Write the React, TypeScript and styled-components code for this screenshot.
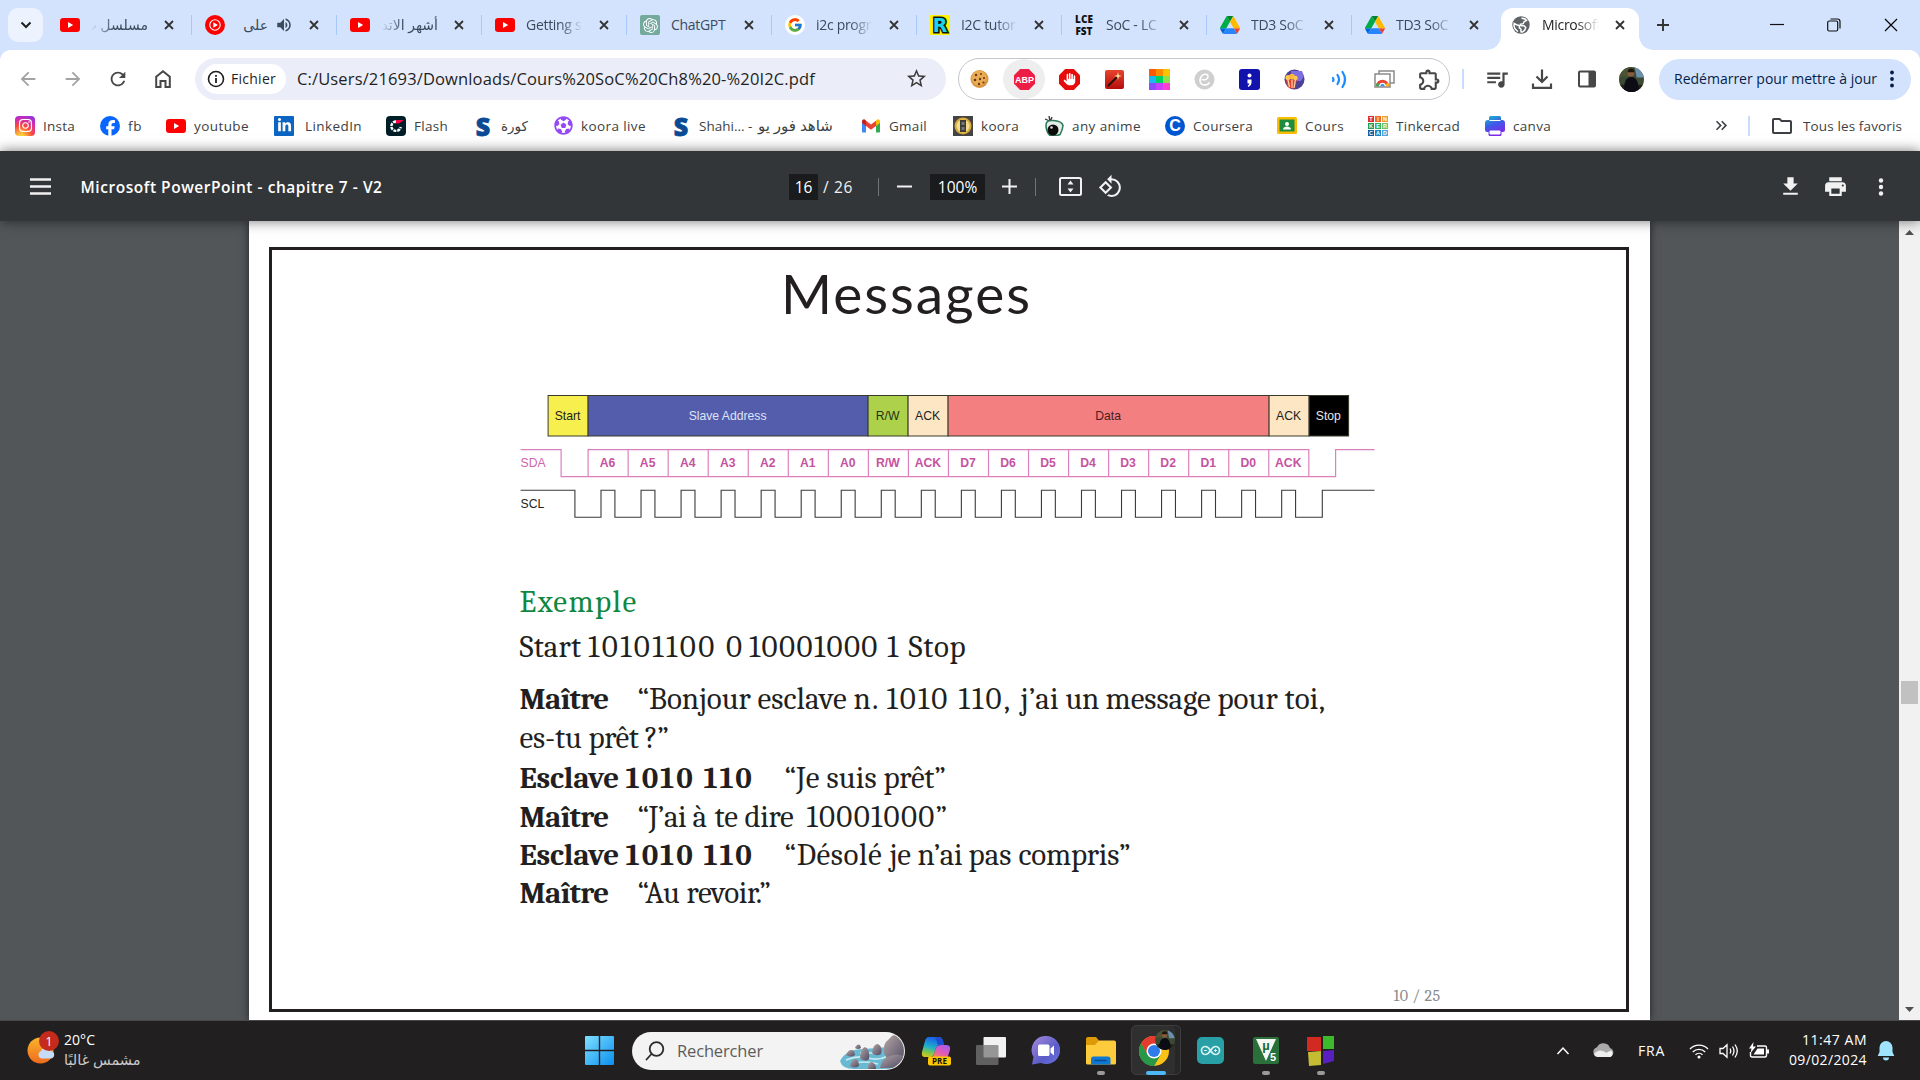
import React, { useLayoutEffect, useRef, useState } from "react";
import styled, { createGlobalStyle, css } from "styled-components";
import { FcGoogle } from "react-icons/fc";
import { SiOpenai } from "react-icons/si";
import { FaInstagram, FaLinkedinIn, FaFutbol } from "react-icons/fa";
import { FaHand } from "react-icons/fa6";
import {
  MdVolumeUp,
  MdQueueMusic,
  MdPrint,
  MdFileDownload,
  MdRotate90DegreesCcw,
  MdStarBorder,
  MdOutlineExtension,
  MdOutlineFolder,
  MdKeyboardDoubleArrowRight,
  MdRefresh,
  MdArrowBack,
  MdArrowForward,
} from "react-icons/md";

const ui = `"Segoe UI", "Open Sans", "Noto Sans", "DejaVu Sans", sans-serif`;
const serif = `Cambria, Caladea, "Liberation Serif", serif`;

const Global = createGlobalStyle`
  * { box-sizing: border-box; }
  body { margin: 0; background: #202020; font-family: ${ui}; overflow: hidden; }
  svg { display: block; flex: none; }
`;

const FitSpan = styled.span`
  display: inline-block;
  width: max-content;
  white-space: pre;
  flex: none;
`;

/* Tracks text so that it fills the given width. */
function Fit({ width, children }: { width: number; children: string }) {
  const ref = useRef<HTMLSpanElement>(null);
  const [spacing, setSpacing] = useState(0);
  useLayoutEffect(() => {
    if (!ref.current) return;
    ref.current.style.letterSpacing = "0px";
    const natural = ref.current.getBoundingClientRect().width;
    const next = (width - natural) / children.length;
    ref.current.style.letterSpacing = `${next}px`;
    setSpacing(next);
  }, [width, children]);
  return (
    <FitSpan ref={ref} style={{ letterSpacing: spacing }}>
      {children}
    </FitSpan>
  );
}

type Word = [string, number];
const WordRow = styled.span`
  display: inline-flex;
`;
/* A line of words, each tracked to its own advance width. */
const Words = ({ list }: { list: Word[] }) => (
  <WordRow>
    {list.map(([t, w], i) => (
      <Fit key={i} width={w}>{i < list.length - 1 ? `${t} ` : t}</Fit>
    ))}
  </WordRow>
);

const Screen = styled.div`
  width: 1920px;
  height: 1080px;
  display: flex;
  flex-direction: column;
  overflow: hidden;
`;

/* ---------- tab strip ---------- */

const TabStrip = styled.div`
  height: 50px;
  background: #d3e3fd;
  display: flex;
  align-items: flex-start;
  padding-left: 8px;
`;
const TabSearch = styled.div`
  width: 35px;
  height: 34px;
  margin: 8px 4px 0 0;
  border-radius: 10px;
  background: #ecf3fe;
  display: grid;
  place-items: center;
`;
const TabBox = styled.div<{ $active?: boolean; $line?: boolean }>`
  position: relative;
  width: 145px;
  height: 50px;
  padding: 0 0 0 13px;
  display: flex;
  align-items: center;
  flex: none;
  color: #3c4a5c;
  ${(p) =>
    p.$line &&
    css`
      background: linear-gradient(#a8c7fa, #a8c7fa) 144px 15px / 2px 20px no-repeat;
    `}
  ${(p) =>
    p.$active &&
    css`
      width: 138px;
      height: 42px;
      margin: 8px 0 0 4px;
      padding: 0 0 8px 10px;
      background: #fff;
      border-radius: 12px 12px 0 0;
      color: #1f1f1f;
      &::before,
      &::after {
        content: "";
        position: absolute;
        bottom: 0;
        width: 14px;
        height: 14px;
      }
      &::before {
        left: -14px;
        background: radial-gradient(circle at 0 0, transparent 13.5px, #fff 14px);
      }
      &::after {
        right: -14px;
        background: radial-gradient(circle at 100% 0, transparent 13.5px, #fff 14px);
      }
    `}
`;
const TabText = styled.div<{ $rtl?: boolean; $w?: number; $full?: boolean }>`
  width: ${(p) => p.$w ?? 57}px;
  margin-left: 11px;
  font-size: 14px;
  line-height: 24px;
  letter-spacing: ${(p) => (p.$rtl ? 0 : -0.3)}px;
  white-space: nowrap;
  overflow: hidden;
  direction: ${(p) => (p.$rtl ? "rtl" : "ltr")};
  ${(p) =>
    !p.$full &&
    css`
      mask-image: linear-gradient(to ${p.$rtl ? "left" : "right"}, #000 60%, transparent 100%);
    `}
`;
const TabClose = styled.div`
  margin-left: 15.5px;
  color: #333;
`;
const NewTab = styled.div`
  margin: 17px 0 0 16px;
`;
const WindowButtons = styled.div`
  margin-left: auto;
  height: 49px;
  display: grid;
  grid-template-columns: 57px 57px 58px;
  place-items: center;
`;

/* ---------- toolbar ---------- */

const Toolbar = styled.div`
  position: relative;
  height: 58px;
  background: #fff;
  padding: 8px 8px 8px 17px;
  display: flex;
  align-items: center;
`;
const Corners = styled.div`
  position: absolute;
  inset: 0 0 auto 0;
  height: 10px;
  background: radial-gradient(circle at 10px 10px, transparent 9.5px, #d3e3fd 10px) 0 0 / 10px 10px no-repeat,
    radial-gradient(circle at 0 10px, transparent 9.5px, #d3e3fd 10px) 100% 0 / 10px 10px no-repeat;
`;
const NavIcons = styled.div`
  display: flex;
  gap: 23px;
  width: 178px;
  color: #474747;
`;
const Omnibox = styled.div`
  width: 751px;
  height: 42px;
  border-radius: 21px;
  background: #ebeef8;
  display: flex;
  align-items: center;
  padding: 0 18px 1px 7px;
  font-size: 16.5px;
  color: #1f1f1f;
`;
const Chip = styled.div`
  width: 84px;
  height: 30px;
  border-radius: 15px;
  background: #fff;
  display: flex;
  align-items: center;
  gap: 6px;
  padding-left: 5px;
  margin-right: 11px;
  font-size: 14px;
`;
const OmniEnd = styled.div`
  margin-left: auto;
  color: #3c3c3c;
`;
const Extensions = styled.div`
  width: 492px;
  height: 42px;
  margin-left: 12px;
  border: 1px solid #c3c6cc;
  border-radius: 21px;
  display: flex;
  align-items: center;
  justify-content: space-between;
  padding: 0 9px 0 10px;
`;
const ExtSlot = styled.div<{ $hover?: boolean }>`
  width: 20px;
  height: 20px;
  display: flex;
  align-items: center;
  justify-content: center;
  ${(p) =>
    p.$hover &&
    css`
      width: 42px;
      height: 40px;
      margin: 0 -11px;
      border-radius: 50%;
      background: #eee;
    `}
`;
const Divider = styled.div<{ $m: string }>`
  width: 2px;
  height: 20px;
  background: #c9dcfb;
  margin: ${(p) => p.$m};
  flex: none;
`;
const ToolIcons = styled.div`
  display: grid;
  grid-template-columns: repeat(4, 45px);
  place-items: center;
  color: #474747;
  margin-left: 10px;
`;
const Update = styled.div`
  width: 252px;
  height: 41px;
  margin-left: 5px;
  border-radius: 21px;
  background: #d3e3fd;
  color: #041e49;
  display: flex;
  align-items: center;
  padding: 0 0 1px 15px;
  font-size: 14px;
`;

/* ---------- bookmarks ---------- */

const Bookmarks = styled.div`
  height: 43px;
  background: #fff;
  padding: 0 18px 8px 15px;
  display: flex;
  align-items: center;
  font-size: 13.5px;
  color: #3c3f43;
`;
const Bookmark = styled.div<{ $w: number; $gap?: number }>`
  width: ${(p) => p.$w}px;
  display: flex;
  align-items: center;
  gap: ${(p) => p.$gap ?? 8}px;
  white-space: nowrap;
  flex: none;
`;
const ArabicPart = styled.span`
  font-size: 15px;
  line-height: 18px;
  margin-left: 2px;
`;
const AllBookmarks = styled.div`
  margin-left: auto;
  display: flex;
  align-items: center;
`;

/* ---------- PDF viewer ---------- */

const PdfBar = styled.div`
  position: relative;
  z-index: 2;
  height: 70px;
  background: #323639;
  box-shadow: 0 0 12px rgba(0, 0, 0, 0.55);
  color: #f1f1f1;
  display: grid;
  grid-template-columns: 789px 1fr 142px;
  align-items: center;
  font-size: 15.5px;
`;
const PdfTitle = styled.div`
  display: flex;
  align-items: center;
  gap: 29.5px;
  padding: 1px 0 0 30px;
  font-weight: 600;
  color: #fff;
`;
const PdfControls = styled.div`
  display: flex;
  align-items: center;
  padding-top: 1px;
`;
const Field = styled.div<{ $w: number }>`
  width: ${(p) => p.$w}px;
  height: 26px;
  line-height: 26px;
  background: #191b1c;
  text-align: center;
  color: #fff;
`;
const PageTotal = styled.div`
  margin-left: 5px;
  width: 55px;
`;
const BarLine = styled.div`
  width: 1px;
  height: 18px;
  background: #70757a;
`;
const Space = styled.div<{ $w: number }>`
  width: ${(p) => p.$w}px;
  flex: none;
`;
const PdfActions = styled.div`
  display: flex;
  align-items: center;
  padding-top: 1px;
`;
const Viewer = styled.div`
  height: 799px;
  background: #525659;
  display: flex;
`;
const Page = styled.div`
  width: 1401px;
  height: 799px;
  margin-left: 249px;
  background: #fff;
  box-shadow: 0 0 8px rgba(0, 0, 0, 0.6);
  padding: 26px 21px 7px 20px;
`;
const Frame = styled.div`
  height: 765px;
  border: 3px solid #231f20;
  padding-top: 10px;
  color: #231f20;
  overflow: hidden;
`;
const Title = styled.h1`
  margin: 0 0 64px 509px;
  font: 400 55px/66px Lato, sans-serif;
`;
const DiagramBox = styled.div`
  margin: 0 0 58px 243px;
`;
const Script = styled.div`
  margin-left: 247.5px;
  display: grid;
  grid-template-rows: 45px 52px 39px 40px 39px 38px 38px 39px;
  font: 400 31px/39px ${serif};
`;
const Line = styled.div<{ $green?: boolean }>`
  display: flex;
  align-items: flex-start;
  height: 39px;
  color: ${(p) => (p.$green ? "#11873f" : "#231f20")};
`;
const Speaker = styled.b<{ $w: number }>`
  width: ${(p) => p.$w}px;
  flex: none;
`;
const PageNumber = styled.div`
  margin: 73px 0 0 1121.5px;
  font: 400 16px/20px ${serif};
  color: #8a8a8a;
`;
const Scrollbar = styled.div`
  margin-left: auto;
  width: 21px;
  background: #f1f1f1;
  display: flex;
  flex-direction: column;
  align-items: center;
  padding: 9px 0 8px;
`;
const Thumb = styled.div`
  width: 17px;
  height: 23px;
  margin: 446px 0 auto;
  background: #c1c1c1;
`;

/* ---------- taskbar ---------- */

const Taskbar = styled.div`
  height: 60px;
  background: #211f1f;
  border-top: 1px solid #484848;
  display: grid;
  grid-template-columns: 585px 970px 365px;
  align-items: center;
  color: #fff;
  font-size: 14px;
`;
const Weather = styled.div`
  display: flex;
  align-items: center;
  padding-left: 26px;
  gap: 4px;
  height: 59px;
`;
const WeatherText = styled.div`
  display: flex;
  flex-direction: column;
  font-size: 14px;
  line-height: 20px;
  padding-bottom: 2px;
`;
const Muted = styled.span`
  color: #c9c9c9;
  font-size: 14.500px;
`;
const Apps = styled.div`
  display: flex;
  align-items: center;
  height: 59px;
`;
const SearchPill = styled.div`
  width: 273px;
  height: 38px;
  margin: 0 3px 0 18px;
  border-radius: 19px;
  background: #f3f3f3;
  color: #5c5c5c;
  display: flex;
  align-items: center;
  padding: 0 2px 0 13px;
  gap: 12px;
  font-size: 16.5px;
`;
const AppSlot = styled.div`
  position: relative;
  width: 55px;
  height: 59px;
  display: grid;
  place-items: center;
`;
const ActiveBack = styled.div`
  width: 50px;
  height: 50px;
  margin-top: -1px;
  border-radius: 5px;
  border: 1px solid #3d3d3d;
  background: #2f2f2f;
  box-shadow: inset -5px 0 0 #272727;
  display: grid;
  place-items: center;
`;
const Running = styled.div<{ $on?: boolean }>`
  position: absolute;
  bottom: 5px;
  left: ${(p) => (p.$on ? 18 : 24)}px;
  width: ${(p) => (p.$on ? 20 : 8)}px;
  height: 4px;
  border-radius: 2px;
  background: ${(p) => (p.$on ? "#4cb8f8" : "#9a9a9a")};
`;
const Tray = styled.div`
  display: grid;
  grid-template-columns: 37px 45px 51px 30px 30px 40px 78px 10px 20px;
  align-items: center;
  padding-left: 1px;
`;
const Clock = styled.div`
  text-align: right;
  display: flex;
  flex-direction: column;
  align-items: flex-end;
  line-height: 20px;
  padding-bottom: 2px;
`;

/* ---------- icons ---------- */

const Yt = () => (
  <svg width="20" height="20" viewBox="0 0 20 20">
    <rect y="3" width="20" height="14" rx="3.2" fill="#f00" />
    <path d="M8 7l5.2 3L8 13z" fill="#fff" />
  </svg>
);
const YtMusic = () => (
  <svg width="20" height="20" viewBox="0 0 20 20">
    <circle cx="10" cy="10" r="10" fill="#f00" />
    <circle cx="10" cy="10" r="5.2" fill="none" stroke="#fff" strokeWidth="1.1" />
    <path d="M8.3 7.2l4.6 2.8-4.6 2.8z" fill="#fff" />
  </svg>
);
const Globe = () => (
  <svg width="20" height="20" viewBox="0 0 20 20">
    <circle cx="10" cy="10" r="8.700" fill="#5f6368" />
    <path d="M10.500 3.200c2.500 0 4 .9 5 2.300l-2.300 1-1 2.200-2.700.6.500 1.500h3l1.700 1.700-1 2.700-2.200 1.800-1.500-.1v-2.600l-1.700-1.700V10.500L5.500 9.700 3.200 8.500 3 11q.3 3 3.200 5l.8.400" fill="none" stroke="#fff" strokeWidth="1.500" />
  </svg>
);
const Drive = () => (
  <svg width="20" height="20" viewBox="0 0 87.3 78">
    <path d="m6.6 66.85 3.85 6.65c.8 1.4 1.95 2.5 3.3 3.3l13.75-23.8h-27.5c0 1.55.4 3.1 1.2 4.5z" fill="#0066da" />
    <path d="m43.65 25-13.75-23.8c-1.35.8-2.5 1.9-3.3 3.3l-25.4 44a9.06 9.06 0 0 0 -1.2 4.5h27.5z" fill="#00ac47" />
    <path d="m73.55 76.8c1.35-.8 2.5-1.9 3.3-3.3l1.6-2.75 7.65-13.25c.8-1.4 1.2-2.95 1.2-4.5h-27.5l5.85 11.5z" fill="#ea4335" />
    <path d="m43.65 25 13.75-23.8c-1.35-.8-2.9-1.2-4.5-1.2h-18.5c-1.6 0-3.15.45-4.5 1.2z" fill="#00832d" />
    <path d="m59.8 53h-32.3l-13.75 23.8c1.35.8 2.9 1.2 4.5 1.2h50.8c1.6 0 3.15-.45 4.5-1.2z" fill="#2684fc" />
    <path d="m73.4 26.5-12.7-22c-.8-1.4-1.95-2.5-3.3-3.3l-13.75 23.8 16.15 28h27.45c0-1.55-.4-3.1-1.2-4.5z" fill="#ffba00" />
  </svg>
);
const Tile = styled.div<{ $bg?: string; $fg?: string; $r?: number; $fs?: number }>`
  width: 20px;
  height: 20px;
  border-radius: ${(p) => p.$r ?? 3}px;
  background: ${(p) => p.$bg ?? "transparent"};
  color: ${(p) => p.$fg ?? "#fff"};
  display: grid;
  place-items: center;
  flex: none;
  font: 700 ${(p) => p.$fs ?? 12}px/1 "Liberation Sans", sans-serif;
`;
const LceTile = styled.div`
  width: 20px;
  font: 800 10px/12px "Open Sans", sans-serif;
  color: #111;
  text-align: center;
  margin-left: -1px;
  margin-right: 1px;
`;
const Comic = styled(Tile)`
  font: 900 19px/1 "DejaVu Sans", sans-serif;
  background: #fff200;
  color: #19d4ee;
  border-radius: 0;
  -webkit-text-stroke: 3px #111;
  paint-order: stroke fill;
`;
const Cross = ({ s = 10, w = 1.8 }: { s?: number; w?: number }) => (
  <svg width={s} height={s} viewBox={`0 0 ${s} ${s}`}>
    <path d={`M1 1L${s - 1} ${s - 1}M${s - 1} 1L1 ${s - 1}`} stroke="currentColor" strokeWidth={w} />
  </svg>
);
const SLetter = styled(Tile)`
  font: 800 25px/20px "Open Sans", sans-serif;
  color: #0b4a94;
  -webkit-text-stroke: 0.8px #0b4a94;
`;
const SBrand = () => <SLetter>S</SLetter>;
const Gmail = () => (
  <svg width="20" height="20" viewBox="0 0 20 20">
    <path d="M1 4.5v11c0 .8.5 1 1.2 1H5V8z" fill="#4285f4" />
    <path d="M15 8v8.500h2.800c.7 0 1.200-.3 1.200-1v-11z" fill="#34a853" />
    <path d="M5 4.800V10l5 3.800 5-3.800V4.800L10 8.600z" fill="#ea4335" />
    <path d="M1 5.500C1 3.400 3.200 2.800 4.400 3.900L5 4.600V10L1 7z" fill="#c5221f" />
    <path d="M19 5.500c0-2.100-2.200-2.700-3.400-1.600l-.6.700V10l4-3z" fill="#fbbc04" />
  </svg>
);
const Facebook = () => (
  <svg width="20" height="20" viewBox="0 0 20 20">
    <circle cx="10" cy="10" r="10" fill="#0866ff" />
    <path d="M8.300 20v-6.800H6.200v-3h2.100V8.900c0-3.400 1.500-5 4.900-5 .6 0 1.300.1 1.700.2v2.800h-1.400c-1.600 0-2 .7-2 2v1.300h3.200l-.6 3h-2.600V20z" fill="#fff" />
  </svg>
);
const Flash = () => (
  <svg width="20" height="20" viewBox="0 0 20 20">
    <rect width="20" height="20" rx="4" fill="#001e28" />
    <path d="M10 4h8l-5 3.600H9z" fill="#ff0046" />
    <path d="M10 5.500a4.700 4.700 0 1 0 4.700 5.500" fill="none" stroke="#fff" strokeWidth="2.400" strokeDasharray="3 .9" />
  </svg>
);
const KooraTile = () => (
  <svg width="20" height="20" viewBox="0 0 20 20">
    <rect width="20" height="20" fill="#444" />
    <circle cx="10" cy="10" r="8.500" fill="#d9a93a" />
    <circle cx="10" cy="10" r="6.500" fill="#f3dc8b" />
    <path d="M7 4h6v12H7z" fill="#3d3d38" />
    <path d="M8.500 6h3v3h-3zM8.500 11h3v3h-3z" fill="#777" />
  </svg>
);
const Anime = () => (
  <svg width="20" height="20" viewBox="0 0 20 20">
    <path d="M1 3l7 3M5 0l1 5M8 1L6 6" stroke="#333" strokeWidth="1.300" />
    <path d="M2 9Q2 4 9 4.500q9 .5 10 5-.5 5-3 9l-3 1H6Q2 16 2 9z" fill="#e4efe9" stroke="#2f7d5b" strokeWidth="1.600" />
    <ellipse cx="9" cy="14" rx="5.500" ry="5.500" fill="#0c0c0c" />
    <circle cx="7.500" cy="11.500" r="1.300" fill="#ddd" />
  </svg>
);
const Classroom = () => (
  <svg width="20" height="20" viewBox="0 0 20 20">
    <rect y="1" width="20" height="17" rx="1.500" fill="#fbbc04" />
    <rect x="2.500" y="3.500" width="15" height="12" fill="#1e8e3e" />
    <circle cx="10" cy="8" r="2" fill="#fff" />
    <path d="M6 13.500c0-2 2-3 4-3s4 1 4 3z" fill="#fff" />
  </svg>
);
const TinkerGrid = styled.div`
  width: 20px;
  height: 20px;
  display: grid;
  grid-template-columns: repeat(3, 6px);
  grid-auto-rows: 6px;
  gap: 1px;
  color: #fff;
  font: 700 5.500px/6px "Liberation Sans", sans-serif;
  text-align: center;
`;
const TinkerCell = styled.span<{ $c: string }>`
  background: ${(p) => p.$c};
`;
const tinker: [string, string][] = [
  ["T", "#e0302a"], ["I", "#f26b2b"], ["N", "#f59a33"],
  ["K", "#1c9b58"], ["E", "#35b45b"], ["R", "#6cc56b"],
  ["C", "#12609e"], ["A", "#2286c6"], ["D", "#49a9dd"],
];
const Tinkercad = () => (
  <TinkerGrid>
    {tinker.map(([l, c]) => (
      <TinkerCell key={l} $c={c}>{l}</TinkerCell>
    ))}
  </TinkerGrid>
);
const Canva = () => (
  <svg width="20" height="20" viewBox="0 0 20 20">
    <defs>
      <linearGradient id="cv" x1="0" y1="0" x2=".4" y2="1">
        <stop offset="0" stopColor="#12c4c8" />
        <stop offset=".5" stopColor="#3d5be8" />
        <stop offset="1" stopColor="#7d2ae8" />
      </linearGradient>
    </defs>
    <path d="M4 1.500Q4 0 5.500 0h9Q16 0 16 1.500V4h1q3 0 3 3v7q0 2-2 2h-1.500v2.500q0 1.500-1.500 1.500H5q-1.500 0-1.500-1.500V16H2q-2 0-2-2V7q0-3 3-3h1z" fill="url(#cv)" />
    <path d="M4.500 4.500h11M5 15h10v3H5z" stroke="#fff" strokeWidth="1" fill="#fff" />
  </svg>
);

const Home = () => (
  <svg width="22" height="22" viewBox="0 0 22 22" fill="none" stroke="currentColor" strokeWidth="2">
    <path d="M4.200 8.800L11 3.200l6.800 5.600V19h-4.300v-6h-5v6H4.200z" />
  </svg>
);
const Info = () => (
  <svg width="18" height="18" viewBox="0 0 18 18">
    <circle cx="9" cy="9" r="7.500" fill="none" stroke="#1f1f1f" strokeWidth="1.600" />
    <path d="M8.100 8h1.800v5H8.100zM8.100 5h1.800v1.800H8.100z" fill="#1f1f1f" />
  </svg>
);
const Cookie = () => (
  <svg width="19" height="20" viewBox="0 0 19 20">
    <circle cx="9.500" cy="10" r="9" fill="#d9953f" />
    <circle cx="9" cy="9" r="7.500" fill="#e9ac55" />
    <g fill="#6b3a14">
      <circle cx="6" cy="6" r="1.200" /><circle cx="11" cy="5" r="1" /><circle cx="5" cy="11" r="1.300" />
      <circle cx="10" cy="10" r="1.200" /><circle cx="14" cy="9" r="1.100" /><circle cx="9" cy="15" r="1.200" /><circle cx="13.500" cy="13.500" r="1.100" />
    </g>
  </svg>
);
const Octagon = ({ fill, children }: { fill: string; children?: React.ReactNode }) => (
  <svg width="21" height="21" viewBox="0 0 21 21">
    <path d="M6.200 0h8.600L21 6.200v8.600L14.800 21H6.200L0 14.800V6.200z" fill={fill} />
    {children}
  </svg>
);
const Wand = () => (
  <svg width="19" height="19" viewBox="0 0 19 19">
    <defs>
      <linearGradient id="wd" x1="0" y1="0" x2="0" y2="1"><stop offset="0" stopColor="#e8432e" /><stop offset="1" stopColor="#b50d0d" /></linearGradient>
    </defs>
    <rect width="19" height="19" rx="2" fill="url(#wd)" />
    <path d="M3 16L12 7" stroke="#2b1206" strokeWidth="2.200" />
    <path d="M13 2l.8 3.200L17 6l-3.200.8L13 10l-.8-3.200L9 6l3.200-.8z" fill="#ffe9a0" />
  </svg>
);
const Palette = () => (
  <svg width="21" height="21" viewBox="0 0 21 21">
    {["#ff5a00", "#ff8c00", "#ffc400", "#1cb7f2", "#00d060", "#8fe04a", "#8a4bff", "#c940ff", "#ff3fd0"].map((c, i) => (
      <rect key={c} x={(i % 3) * 7} y={Math.floor(i / 3) * 7} width="7" height="7" fill={c} />
    ))}
  </svg>
);
const GreyC = () => (
  <svg width="21" height="21" viewBox="0 0 21 21">
    <circle cx="10.500" cy="10.500" r="10" fill="#cfcfcf" />
    <path d="M7.500 10.500c4 1 7-1 6.500-3.600-.6-2.600-5.300-2.200-7.200 1.200-2 3.700-.3 8 3.700 8 2.200 0 4-1.100 5-2.600" fill="none" stroke="#fff" strokeWidth="1.500" />
  </svg>
);
const Semi = () => (
  <svg width="21" height="21" viewBox="0 0 21 21">
    <rect width="21" height="21" rx="3" fill="#1212ad" />
    <circle cx="10.500" cy="6.500" r="2" fill="#fff" />
    <path d="M8.500 10.500h4v3.500q0 2.500-3 4l-.8-1.200q1.500-.9 1.600-2.300H8.500z" fill="#fff" />
  </svg>
);
const Popcorn = () => (
  <svg width="21" height="21" viewBox="0 0 21 21">
    <circle cx="10.500" cy="10.500" r="10" fill="#4b4296" />
    <path d="M7 2h11l2 5-3 5H8z" fill="#7c6ee0" />
    <path d="M2 11l11-1-2 9q-5 2-8-2z" fill="#e2412d" />
    <path d="M4 11l1.500 7M8 10.500v8.500M11.500 10l-1.500 9" stroke="#ffd9a8" strokeWidth="1.200" />
    <circle cx="4" cy="8.500" r="2.600" fill="#ffc84a" /><circle cx="8" cy="7.500" r="2.800" fill="#ffb637" /><circle cx="11.500" cy="9" r="2.200" fill="#ffc84a" />
  </svg>
);
const Waves = () => (
  <svg width="18" height="19" viewBox="0 0 18 19" fill="none" stroke="#1a8cff" strokeWidth="2.200" strokeLinecap="round">
    <path d="M2 8q1 1.500 0 3M6.500 5q3 4.500 0 9M11.500 2q5 7.500 0 15" />
  </svg>
);
const Cast = () => (
  <svg width="21" height="20" viewBox="0 0 21 20">
    <rect x="5" y="2" width="15" height="12" fill="#fff" stroke="#8b8b8b" strokeWidth="1.500" />
    <rect x="1" y="5" width="15" height="13" fill="#fff" stroke="#8b8b8b" strokeWidth="1.500" />
    <path d="M3.500 17.200a5 5 0 0 1 10 0" fill="none" stroke="#ea4335" strokeWidth="3" />
    <path d="M3.500 17.200a5 5 0 0 1 .7-2.600" stroke="#34a853" strokeWidth="3" fill="none" />
    <path d="M13.500 17.200a5 5 0 0 0-.7-2.600" stroke="#fbbc04" strokeWidth="3" fill="none" />
    <path d="M6.300 17.200a2.200 2.200 0 0 1 4.400 0z" fill="#4285f4" />
  </svg>
);
const Download = () => (
  <svg width="22" height="22" viewBox="0 0 22 22" fill="none" stroke="currentColor" strokeWidth="2.200">
    <path d="M11 1.500v12M5.500 8.500l5.500 5.500 5.500-5.500M2 15.500v4.300h18v-4.300" />
  </svg>
);
const SidePanel = () => (
  <svg width="20" height="20" viewBox="0 0 20 20">
    <rect x="2" y="2.500" width="16" height="15" rx="1" fill="none" stroke="currentColor" strokeWidth="2" />
    <rect x="11.500" y="2.500" width="6.500" height="15" fill="currentColor" />
  </svg>
);
const Portrait = ({ s }: { s: number }) => (
  <svg width={s} height={s} viewBox="0 0 24 24">
    <defs><clipPath id={`p${s}`}><circle cx="12" cy="12" r="12" /></clipPath></defs>
    <g clipPath={`url(#p${s})`}>
      <rect width="24" height="24" fill="#3d4a33" />
      <rect width="12" height="9" fill="#4b5334" />
      <path d="M15 0h9v10h-7z" fill="#6d8fae" />
      <path d="M0 17h24v7H0z" fill="#1f2317" />
      <circle cx="11.500" cy="6" r="3.200" fill="#8a5b3c" />
      <path d="M8.300 5q0-3.500 3.200-3.500T14.700 5z" fill="#1d1410" />
      <path d="M5 24q-1-14 6.500-14.500T19 24z" fill="#0b0c14" />
    </g>
  </svg>
);
const Dots = ({ gap = 6.5, r = 1.9 }: { gap?: number; r?: number }) => (
  <svg width="6" height="20" viewBox="0 0 6 20" fill="currentColor">
    <circle cx="3" cy={10 - gap} r={r} /><circle cx="3" cy="10" r={r} /><circle cx="3" cy={10 + gap} r={r} />
  </svg>
);
const FitPage = () => (
  <svg width="23" height="19" viewBox="0 0 23 19">
    <rect x="1" y="1" width="21" height="17" rx="1.500" fill="none" stroke="currentColor" strokeWidth="2" />
    <path d="M11.500 3.500l3 4h-6zM11.500 15.500l3-4h-6z" fill="currentColor" />
  </svg>
);

/* ---------- bus timing chart ---------- */

const blocks: [string, number, number, string, string][] = [
  ["Start", 548.5, 588.5, "#f6ef4d", "#222"],
  ["Slave Address", 588.5, 868.5, "#535dab", "#dfe3f6"],
  ["R/W", 868.5, 908.5, "#aed14b", "#23331a"],
  ["ACK", 908.5, 948.5, "#fde6c3", "#222"],
  ["Data", 948.5, 1269.5, "#f47f80", "#4a1c1e"],
  ["ACK", 1269.5, 1309.5, "#fde6c3", "#222"],
  ["Stop", 1309.5, 1349, "#000", "#e8e8e8"],
];
const bits = ["A6", "A5", "A4", "A3", "A2", "A1", "A0", "R/W", "ACK", "D7", "D6", "D5", "D4", "D3", "D2", "D1", "D0", "ACK"];
const pitch = 40.04;
const ChartSvg = styled.svg`
  font-family: "Liberation Sans", Arial, sans-serif;
  font-size: 12.2px;
`;

function Chart() {
  const clock = bits.map((_, i) => `H${601.4 + i * pitch}V490.300H${615.300 + i * pitch}V517.300`).join("");
  return (
    <ChartSvg width="865" height="135" viewBox="515.400 390 865 135">
      {blocks.map(([t, a, b, bg, fg]) => (
        <g key={a}>
          <rect x={a} y="395.500" width={b - a} height="40.500" fill={bg} stroke="#3a3a28" strokeWidth="1" />
          <text x={(a + b) / 2 - 0.5} y="420" fill={fg} textAnchor="middle">{t}</text>
        </g>
      ))}
      <g fill="none" stroke="#dc80bd" strokeWidth="1.200">
        <path d="M521 449.600H561.500V476.700H1336V449.600H1375" />
        <path d={`M588.500 476.700V449.600H${588.5 + 18 * pitch}V476.700`} />
        {bits.slice(1).map((_, i) => (
          <path key={i} d={`M${588.5 + (i + 1) * pitch} 449.600V476.700`} />
        ))}
      </g>
      <text x="521" y="467" fill="#d065ad">SDA</text>
      {bits.map((b, i) => (
        <text key={i} x={608 + i * pitch} y="467" fill="#c653a0" fontWeight="700" textAnchor="middle">{b}</text>
      ))}
      <path d={`M521 490.300H575.300V517.300${clock}H1322.700V490.300H1375`} fill="none" stroke="#3a3a3a" strokeWidth="1.100" />
      <text x="521" y="508" fill="#222">SCL</text>
    </ChartSvg>
  );
}

/* ---------- taskbar drawings ---------- */

const WeatherIcon = () => (
  <svg width="34" height="40" viewBox="0 0 34 40">
    <defs><linearGradient id="sun" x1="0" y1="0" x2="0" y2="1"><stop offset="0" stopColor="#f9b52c" /><stop offset="1" stopColor="#ee6a1c" /></linearGradient></defs>
    <circle cx="14.500" cy="19.500" r="13" fill="url(#sun)" />
    <path d="M15 27.500a4 4 0 0 1 0-7.500 5.500 5.500 0 0 1 10 0 3.800 3.800 0 0 1 0 7.500z" fill="#c5dcf8" />
    <circle cx="23" cy="10" r="10" fill="#c42b1c" />
    <text x="23" y="14.500" textAnchor="middle" fill="#fff" fontSize="13" fontFamily="Open Sans, sans-serif">1</text>
  </svg>
);
const Windows = () => (
  <svg width="29" height="29" viewBox="0 0 29 29">
    <defs><linearGradient id="win" x1="0" y1="0" x2="1" y2="1"><stop offset="0" stopColor="#7fe0ff" /><stop offset="1" stopColor="#0a8ff0" /></linearGradient></defs>
    <path d="M0 1q0-1 1-1h12.800v13.800H0zM15.200 0H28q1 0 1 1v12.800H15.200zM0 15.200h13.800V29H1q-1 0-1-1zM15.200 15.200H29V28q0 1-1 1H15.200z" fill="url(#win)" />
  </svg>
);
const Magnifier = () => (
  <svg width="20" height="20" viewBox="0 0 20 20" fill="none" stroke="#2b2b2b" strokeWidth="1.800" strokeLinecap="round">
    <circle cx="11.500" cy="8" r="6.800" /><path d="M6.500 13l-5 5.500" />
  </svg>
);
const Rocks = () => (
  <svg width="66" height="36" viewBox="0 0 66 36">
    <defs>
      <linearGradient id="rk" x1="0" y1="0" x2="1" y2="1"><stop offset="0" stopColor="#b7a6a6" /><stop offset="1" stopColor="#4d4b63" /></linearGradient>
      <clipPath id="rc"><path d="M0 0h48a17 17 0 0 1 0 36H0z" /></clipPath>
    </defs>
    <g clipPath="url(#rc)">
      <path d="M2 28Q8 16 26 16L50 14 62 24 56 36H16Q4 36 2 28z" fill="#67bad2" />
      <path d="M8 27q12-5 22-2t20-2M14 31q12-4 26 0M22 20h20" stroke="#c9eaf2" strokeWidth="1.700" fill="none" />
      <g fill="url(#rk)">
        <path d="M46 20q-1-10 4-13l4-4q4-3 8 2l4 6v14l-7 6-9-3z" />
        <path d="M42 35q2-10 10-12 8-3 13 0v12z" />
      </g>
      <g fill="url(#rk)">
        <path d="M22 25q1-10 5-11 5 2 4 12-4 4-9-1z" /><path d="M12 33q2-8 6-7 3 2 3 7-5 3-9 0z" />
        <path d="M34 20q1-9 6-9 5 3 3 10-5 3-9-1z" /><path d="M8 22q3-7 8-4l1 4q-4 3-9 0z" />
        <path d="M30 36q0-8 4-7 4 2 4 7z" /><path d="M17 15q2-5 5-3l1 3q-3 2-6 0z" />
      </g>
    </g>
  </svg>
);
const Copilot = () => (
  <svg width="30" height="30" viewBox="0 0 30 30">
    <defs>
      <linearGradient id="c1" x1=".3" y1="0" x2="0" y2="1"><stop offset="0" stopColor="#1c64ea" /><stop offset=".45" stopColor="#1fb2c8" /><stop offset=".75" stopColor="#8fc93c" /><stop offset="1" stopColor="#f5c518" /></linearGradient>
      <linearGradient id="c2" x1=".8" y1="0" x2=".2" y2="1"><stop offset="0" stopColor="#a45cf0" /><stop offset=".5" stopColor="#e05ab8" /><stop offset="1" stopColor="#f58a5a" /></linearGradient>
    </defs>
    <path d="M8 1h10q3 0 4 4l1 4h-5q-2 0-3 3l-2 6q-1 3-4 3H4q-4 0-3-5L4 5Q5 1 8 1z" fill="url(#c1)" />
    <path d="M14 1h4q3 0 4 4l1 4h-5q-2 0-2-3z" fill="#1b4fd0" />
    <path d="M20 9h5q5 0 4 5l-3 9H11l4-11q1-3 5-3z" fill="url(#c2)" />
    <rect x="7" y="20.500" width="23" height="9" rx="2" fill="#ffc800" />
    <text x="18.500" y="28" textAnchor="middle" fontSize="8" fontWeight="700" fill="#111" fontFamily="Open Sans, sans-serif">PRE</text>
  </svg>
);
const TaskView = () => (
  <svg width="30" height="28" viewBox="0 0 30 28">
    <rect x="7.500" width="22.500" height="20.500" rx="1" fill="#f2f2f2" />
    <rect y="8" width="22.500" height="20" rx="1" fill="#777" fillOpacity=".75" />
  </svg>
);
const Chat = () => (
  <svg width="29" height="29" viewBox="0 0 29 29">
    <defs><linearGradient id="ch" x1="0" y1="0" x2="1" y2="1"><stop offset="0" stopColor="#a78cdc" /><stop offset=".6" stopColor="#5b5cc8" /><stop offset="1" stopColor="#6b74e0" /></linearGradient></defs>
    <path d="M15 0a14 14 0 1 1-5 27L1 28.500 2.500 21A14 14 0 0 1 15 0z" fill="url(#ch)" />
    <rect x="7" y="8.500" width="11.500" height="11.500" rx="1.500" fill="#fff" />
    <path d="M19.500 12.500l3.500-3v10l-3.500-3z" fill="#fff" />
  </svg>
);
const Folder = () => (
  <svg width="30" height="28" viewBox="0 0 30 28">
    <path d="M0 2q0-2 2-2h8l3 3.500V10H0z" fill="#dd9a07" />
    <path d="M0 8h9l4-4.500h15q2 0 2 2V26q0 1.500-1.500 1.500h-27Q0 27.500 0 26z" fill="#fdcb3c" />
    <path d="M5 27.500V22q0-2.500 2.500-2.500h14.500q2.500 0 2.500 2.500v5.500z" fill="#0f78d0" />
    <path d="M8.500 23.500h12" stroke="#0a4c94" strokeWidth="1.500" />
  </svg>
);
const Chrome = () => (
  <svg width="38" height="40" viewBox="0 0 38 40">
    <circle cx="17" cy="21" r="15" fill="#fbc116" />
    <path d="M17 21L4 13.500A15 15 0 0 1 30 13.500z" fill="#e33b2e" />
    <path d="M4 13.500A15 15 0 0 0 17 36l6.500-11.200L10.500 24.800z" fill="#279847" />
    <path d="M17 13.500H30A15 15 0 0 0 4 13.500L10.500 24.700 17 21z" fill="#e33b2e" />
    <path d="M4 13.500A15 15 0 0 0 17 36l6.500-11.200L17 21l-6.500 3.700z" fill="#279847" />
    <circle cx="17" cy="21" r="7.500" fill="#fff" /><circle cx="17" cy="21" r="6" fill="#2e7bea" />
    <g transform="translate(18 0)"><Portrait s={20} /></g>
  </svg>
);
const Arduino = () => (
  <svg width="27" height="27" viewBox="0 0 27 27">
    <rect width="27" height="27" rx="5" fill="#28a0a6" />
    <path d="M13.500 13.500q-2.500-4-5-4a4 4 0 0 0 0 8q2.500 0 5-4 2.500-4 5-4a4 4 0 0 1 0 8q-2.500 0-5-4z" fill="none" stroke="#d8f1f1" strokeWidth="1.700" />
    <path d="M7 13.500h3M17 13.500h3M18.500 12v3" stroke="#d8f1f1" strokeWidth="1" />
  </svg>
);
const UVision = () => (
  <svg width="26" height="27" viewBox="0 0 26 27">
    <rect width="26" height="27" rx="2" fill="#29703a" />
    <path d="M3 2h20L13 24z" fill="#f4f7f4" />
    <text x="13" y="13" textAnchor="middle" fontSize="13" fontWeight="700" fill="#1d6b34" fontFamily="Liberation Sans, sans-serif">µ</text>
    <text x="20" y="24" textAnchor="middle" fontSize="11" fontWeight="700" fill="#fff" fontFamily="Liberation Sans, sans-serif">5</text>
  </svg>
);
const Blocks = () => (
  <svg width="28" height="30" viewBox="0 0 28 30">
    <path d="M0 1h14v14H0z" fill="#d22a20" /><path d="M16 0h11v13H16z" fill="#3cba2b" />
    <path d="M1 16l13-1v14l-12 1z" fill="#c4bd33" /><path d="M16 15l11-1v11l-11 3z" fill="#5a1fc0" />
  </svg>
);
const Wifi = () => (
  <svg width="20" height="18" viewBox="0 0 20 18" fill="none" stroke="#fff" strokeWidth="1.400">
    <path d="M1 7a12.500 12.500 0 0 1 18 0M3.800 10a8.600 8.600 0 0 1 12.400 0M6.500 12.800a5 5 0 0 1 7 0" />
    <circle cx="10" cy="15" r="1.500" fill="#fff" stroke="none" />
  </svg>
);
const Volume = () => (
  <svg width="20" height="18" viewBox="0 0 20 18" fill="none" stroke="#fff" strokeWidth="1.300">
    <path d="M1 6.500h3l4-3.800v12.600l-4-3.800H1zM11 6.500q1.500 2.500 0 5M13.500 4.500q3 4.500 0 9M16 2.500q4.500 6.500 0 13" />
  </svg>
);
const Battery = () => (
  <svg width="20" height="18" viewBox="0 0 20 18">
    <path d="M8 4h8q1.500 0 1.500 1.500v8q0 1.500-1.500 1.500H3q-1.500 0-1.500-1.500V10" fill="none" stroke="#fff" strokeWidth="1.400" />
    <path d="M18 7.500h2v4h-2zM8.500 6.500h6.500v6H4.500z" fill="#fff" />
    <path d="M4.500 0L0 6.500h2.500L1.500 11 7 4.500H4z" fill="#fff" />
  </svg>
);
const Cloud = () => (
  <svg width="22" height="15" viewBox="0 0 22 15">
    <path d="M5 14a5 5 0 0 1-1-9.800A7 7 0 0 1 17 5a4.700 4.700 0 0 1 0 9z" fill="#aaa" />
    <path d="M5 14l13-6.500A4 4 0 0 1 17.500 14z" fill="#f2f2f2" /><path d="M1 11q5-6 11-2l6 4-1 1H5q-3 0-4-3z" fill="#ededed" />
  </svg>
);
const Bell = () => (
  <svg width="18" height="20" viewBox="0 0 18 20" fill="#9fe3ff">
    <path d="M9 0a6.500 6.500 0 0 1 6.500 6.500V11l1.800 4H.7l1.800-4V6.500A6.500 6.500 0 0 1 9 0zM6 16.500h6a3 3 0 0 1-6 0z" />
  </svg>
);

/* ---------- data ---------- */

type TabData = { icon: React.ReactNode; text: string; rtl?: boolean; full?: boolean; audio?: boolean };
const GptTile = () => (
  <Tile $bg="#74aa9c" $r={2}><SiOpenai size={15} /></Tile>
);
const GoogleTile = () => (
  <Tile $bg="#fff" $r={10}><FcGoogle size={16} /></Tile>
);
const Lce = () => (
  <LceTile>LCE<br />FST</LceTile>
);
const tabs: TabData[] = [
  { icon: <Yt />, text: "مسلسل ب", rtl: true },
  { icon: <YtMusic />, text: "على", rtl: true, audio: true },
  { icon: <Yt />, text: "أشهر الاتد", rtl: true },
  { icon: <Yt />, text: "Getting s" },
  { icon: <GptTile />, text: "ChatGPT", full: true },
  { icon: <GoogleTile />, text: "i2c progr" },
  { icon: <Comic>R</Comic>, text: "I2C tutor" },
  { icon: <Lce />, text: "SoC - LC" },
  { icon: <Drive />, text: "TD3 SoC" },
  { icon: <Drive />, text: "TD3 SoC" },
];

type Mark = { icon: React.ReactNode; text: string; arabic?: string; slot: number; w?: number; gap?: number };
const marks: Mark[] = [
  { icon: <Tile $bg="radial-gradient(circle at 30% 105%, #fdd13a 10%, #fb4a3c 45%, #d22bb0 70%, #7a35f0 100%)" $r={4}><FaInstagram size={15} /></Tile>, text: "Insta", slot: 85, w: 32 },
  { icon: <Facebook />, text: "fb", slot: 66, w: 14 },
  { icon: <Yt />, text: "youtube", slot: 108, w: 55 },
  { icon: <Tile $bg="#0a66c2" $r={1}><FaLinkedinIn size={15} /></Tile>, text: "LinkedIn", slot: 112, w: 57, gap: 11 },
  { icon: <Flash />, text: "Flash", slot: 87, w: 34 },
  { icon: <SBrand />, text: "كورة", slot: 81 },
  { icon: <FaFutbol size={19} color="#9447f5" />, text: "koora live", slot: 117, w: 65 },
  { icon: <SBrand />, text: "Shahi... - ", arabic: "شاهد فور يو", slot: 190, w: 57 },
  { icon: <Gmail />, text: "Gmail", slot: 92, w: 38 },
  { icon: <KooraTile />, text: "koora", slot: 91, w: 38 },
  { icon: <Anime />, text: "any anime", slot: 121, w: 69 },
  { icon: <Tile $bg="#0056d2" $r={10} $fs={16}>C</Tile>, text: "Coursera", slot: 112, w: 60 },
  { icon: <Classroom />, text: "Cours", slot: 91, w: 39 },
  { icon: <Tinkercad />, text: "Tinkercad", slot: 117, w: 64 },
  { icon: <Canva />, text: "canva", slot: 80, w: 38 },
];

const slave: Word[] = [["Esclave", 106], ["1010", 78], ["110", 50]];
const master: Word[] = [["Maître", 89]];
const frame: Word[] = [["Start", 68.5], ["10101100", 138], ["0", 23], ["10001000", 138], ["1", 21.5], ["Stop", 58]];
const dialogue: { who?: Word[]; col: number; says: Word[] }[] = [
  {
    who: master,
    col: 118,
    says: [["“Bonjour", 120], ["esclave", 96], ["n.", 33], ["1010", 72], ["110,", 62], ["j’ai", 45], ["un", 40], ["message", 112], ["pour", 67], ["toi,", 41]],
  },
  { col: 0, says: [["es-tu", 69], ["prêt ?”", 80]] },
  { who: slave, col: 265, says: [["“Je", 42], ["suis", 57], ["prêt”", 62]] },
  { who: master, col: 118, says: [["“J’ai", 55], ["à", 22], ["te", 30], ["dire ", 62], ["10001000”", 142]] },
  { who: slave, col: 265, says: [["“Désolé", 105], ["je", 28], ["n’ai", 51], ["pas", 50], ["compris”", 112]] },
  { who: master, col: 118, says: [["“Au", 49], ["revoir.”", 84]] },
];

export default function App() {
  return (
    <Screen>
      <Global />
      <TabStrip>
        <TabSearch>
          <svg width="12" height="8" viewBox="0 0 12 8" fill="none" stroke="#1f1f1f" strokeWidth="2"><path d="M1.500 1.500L6 6l4.500-4.500" /></svg>
        </TabSearch>
        {tabs.map((t, i) => (
          <TabBox key={i} $line={i < 9}>
            {t.icon}
            <TabText $rtl={t.rtl} $full={t.full || t.audio} $w={t.audio ? 32 : 57}>{t.text}</TabText>
            {t.audio && <Space $w={7} />}
            {t.audio && <MdVolumeUp size={18} />}
            <TabClose><Cross /></TabClose>
          </TabBox>
        ))}
        <TabBox $active>
          <Globe />
          <TabText>Microsoft</TabText>
          <TabClose><Cross /></TabClose>
        </TabBox>
        <NewTab>
          <svg width="16" height="16" viewBox="0 0 16 16" stroke="#333" strokeWidth="1.900"><path d="M8 2v12M2 8h12" /></svg>
        </NewTab>
        <WindowButtons>
          <svg width="14" height="14" viewBox="0 0 14 14" stroke="#111" strokeWidth="1.200"><path d="M0 6.500h14" /></svg>
          <svg width="14" height="14" viewBox="0 0 14 14" fill="none" stroke="#111" strokeWidth="1.200"><rect x=".7" y="3" width="10" height="10" rx="1.500" /><path d="M3.500 1h7q2.500 0 2.500 2.500v7" /></svg>
          <Cross s={14} w={1.2} />
        </WindowButtons>
      </TabStrip>

      <Toolbar>
        <Corners />
        <NavIcons>
          <MdArrowBack size={22} color="#a3a3a3" />
          <MdArrowForward size={22} color="#a3a3a3" />
          <MdRefresh size={22} />
          <Home />
        </NavIcons>
        <Omnibox>
          <Chip><Info /><Fit width={45}>Fichier</Fit></Chip>
          <Fit width={518}>C:/Users/21693/Downloads/Cours%20SoC%20Ch8%20-%20I2C.pdf</Fit>
          <OmniEnd><MdStarBorder size={23} /></OmniEnd>
        </Omnibox>
        <Extensions>
          <ExtSlot><Cookie /></ExtSlot>
          <ExtSlot $hover>
            <Octagon fill="#ed1e45"><text x="10.500" y="14" textAnchor="middle" fontSize="9" fontWeight="700" fill="#fff" fontFamily="Liberation Sans, sans-serif">ABP</text></Octagon>
          </ExtSlot>
          <ExtSlot><Octagon fill="#e60c0c"><FaHand x="4.500" y="4" size={12.5} color="#fff" /></Octagon></ExtSlot>
          <ExtSlot><Wand /></ExtSlot>
          <ExtSlot><Palette /></ExtSlot>
          <ExtSlot><GreyC /></ExtSlot>
          <ExtSlot><Semi /></ExtSlot>
          <ExtSlot><Popcorn /></ExtSlot>
          <ExtSlot><Waves /></ExtSlot>
          <ExtSlot><Cast /></ExtSlot>
          <ExtSlot><MdOutlineExtension size={25} color="#474747" /></ExtSlot>
        </Extensions>
        <Divider $m="0 0 0 12px" />
        <ToolIcons>
          <MdQueueMusic size={26} />
          <Download />
          <SidePanel />
          <Portrait s={25} />
        </ToolIcons>
        <Update>
          <Fit width={203}>Redémarrer pour mettre à jour</Fit>
          <Space $w={12} />
          <Dots />
        </Update>
      </Toolbar>

      <Bookmarks>
        {marks.map((m, i) => (
          <Bookmark key={i} $w={m.slot} $gap={m.gap}>
            {m.icon}
            {m.w ? (
              <span>
                <Fit width={m.w}>{m.text}</Fit>
                {m.arabic && <ArabicPart>{m.arabic}</ArabicPart>}
              </span>
            ) : (
              <span>{m.text}</span>
            )}
          </Bookmark>
        ))}
        <AllBookmarks>
          <MdKeyboardDoubleArrowRight size={19} />
          <Divider $m="0 20px 0 17px" />
          <MdOutlineFolder size={24} />
          <Space $w={9} />
          <Fit width={99}>Tous les favoris</Fit>
        </AllBookmarks>
      </Bookmarks>

      <PdfBar>
        <PdfTitle>
          <svg width="21" height="17" viewBox="0 0 21 17" stroke="#f1f1f1" strokeWidth="2.300"><path d="M0 1.500h21M0 8.500h21M0 15.500h21" /></svg>
          <Fit width={302}>Microsoft PowerPoint - chapitre 7 - V2</Fit>
        </PdfTitle>
        <PdfControls>
          <Field $w={29}>16</Field>
          <PageTotal><Fit width={30}>/ 26</Fit></PageTotal>
          <BarLine />
          <Space $w={18} />
          <svg width="15" height="15" viewBox="0 0 15 15" stroke="currentColor" strokeWidth="2"><path d="M0 7.500h15" /></svg>
          <Space $w={18} />
          <Field $w={55}>100%</Field>
          <Space $w={17} />
          <svg width="15" height="15" viewBox="0 0 15 15" stroke="currentColor" strokeWidth="2"><path d="M0 7.500h15M7.500 0v15" /></svg>
          <Space $w={18} />
          <BarLine />
          <Space $w={23} />
          <FitPage />
          <Space $w={16} />
          <MdRotate90DegreesCcw size={25} />
        </PdfControls>
        <PdfActions>
          <MdFileDownload size={25} />
          <Space $w={20} />
          <MdPrint size={25} />
          <Space $w={30} />
          <Dots r={2.2} />
        </PdfActions>
      </PdfBar>

      <Viewer>
        <Page>
          <Frame>
            <Title><Fit width={251}>Messages</Fit></Title>
            <DiagramBox><Chart /></DiagramBox>
            <Script>
              <Line $green><Fit width={118}>Exemple</Fit></Line>
              <Line><Words list={frame} /></Line>
              {dialogue.map((d, i) => (
                <Line key={i}>
                  {d.who && <Speaker $w={d.col}><Words list={d.who} /></Speaker>}
                  <Words list={d.says} />
                </Line>
              ))}
            </Script>
            <PageNumber><Fit width={47}>10 / 25</Fit></PageNumber>
          </Frame>
        </Page>
        <Scrollbar>
          <svg width="9" height="5" viewBox="0 0 9 5"><path d="M0 5L4.500 0 9 5z" fill="#505050" /></svg>
          <Thumb />
          <svg width="9" height="5" viewBox="0 0 9 5"><path d="M0 0L4.500 5 9 0z" fill="#505050" /></svg>
        </Scrollbar>
      </Viewer>

      <Taskbar>
        <Weather>
          <WeatherIcon />
          <WeatherText>
            <Fit width={31}>20°C</Fit>
            <Muted>مشمس غالبًا</Muted>
          </WeatherText>
        </Weather>
        <Apps>
          <Windows />
          <SearchPill>
            <Magnifier />
            <Fit width={86}>Rechercher</Fit>
            <Space $w={51} />
            <Rocks />
          </SearchPill>
          <AppSlot><Copilot /></AppSlot>
          <AppSlot><TaskView /></AppSlot>
          <AppSlot><Chat /></AppSlot>
          <AppSlot><Folder /><Running /></AppSlot>
          <AppSlot><ActiveBack><Chrome /></ActiveBack><Running $on /></AppSlot>
          <AppSlot><Arduino /></AppSlot>
          <AppSlot><UVision /><Running /></AppSlot>
          <AppSlot><Blocks /><Running /></AppSlot>
        </Apps>
        <Tray>
          <svg width="14" height="9" viewBox="0 0 14 9" fill="none" stroke="#fff" strokeWidth="1.500"><path d="M1.500 8L7 2l5.500 6" /></svg>
          <Cloud />
          <Fit width={27}>FRA</Fit>
          <Wifi />
          <Volume />
          <Battery />
          <Clock>
            <Fit width={65}>11:47 AM</Fit>
            <Fit width={78}>09/02/2024</Fit>
          </Clock>
          <span />
          <Bell />
        </Tray>
      </Taskbar>
    </Screen>
  );
}
